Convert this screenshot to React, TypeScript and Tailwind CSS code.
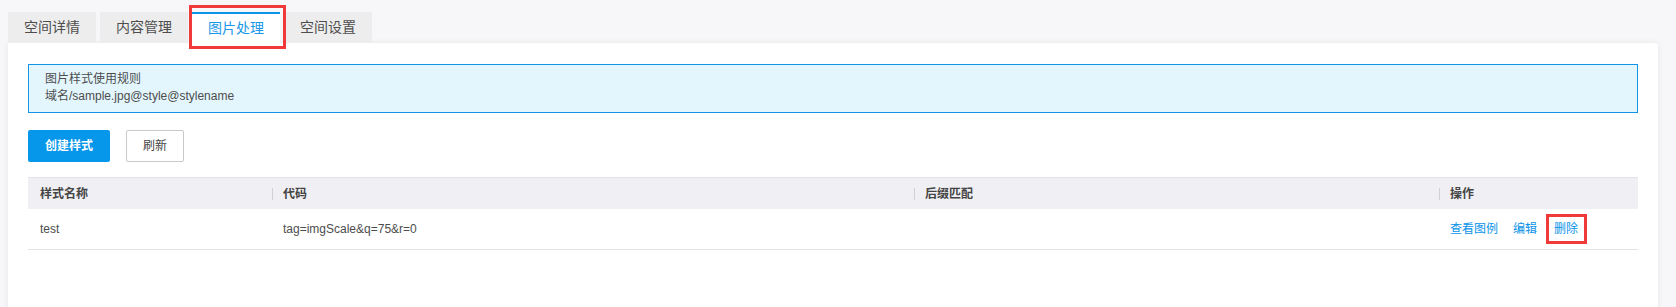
const tabs = ["空间详情", "内容管理", "图片处理", "空间设置"];
const activeTab = "图片处理";

const font = "font-['Liberation_Sans','Noto_Sans_CJK_SC',sans-serif]";

function HeaderCell({ label, divider, className }: { label: string; divider?: boolean; className: string }) {
  return (
    <div className={`flex items-center ${className}`}>
      {divider && <span className="mr-[10px] h-[12px] w-px bg-[#cfcfd4]" aria-hidden="true" />}
      <span className={divider ? "" : "pl-[12px]"}>{label}</span>
    </div>
  );
}

export default function App() {
  return (
    <div className={`h-[307px] w-[1676px] overflow-hidden bg-[#f7f7f9] pt-[12px] ${font}`}>
      <div className="flex gap-[4px] pl-[8px]">
        {tabs.map((tab) => {
          const active = tab === activeTab;
          return (
            <div
              key={tab}
              className={
                active
                  ? "relative flex h-[31px] w-[88px] items-center justify-center border-t-2 border-[#0a96e8] bg-white text-[14px] text-[#1a97e8]"
                  : "flex h-[31px] w-[88px] items-center justify-center bg-[#ededed] text-[14px] text-[#4d4d4d]"
              }
            >
              {tab}
              {active && (
                <span className="pointer-events-none absolute left-[-3px] right-[-6px] top-[-9px] bottom-[-6px] border-[3px] border-[#f03a3a]" />
              )}
            </div>
          );
        })}
      </div>

      <div className="ml-[8px] h-[300px] w-[1650px] rounded-tr-[3px] bg-white px-[20px] pt-[21px] shadow-[0_0_6px_rgba(0,0,0,0.07)]">
        <div className="h-[49px] w-[1610px] border border-[#1193e6] bg-[#e3f6fe] px-[16px] pt-[6px] text-[12px] leading-[17px] text-[#4d4d4d]">
          <p>图片样式使用规则</p>
          <p>域名/sample.jpg@style@stylename</p>
        </div>

        <div className="mt-[17px] flex gap-[16px]">
          <button className="h-[32px] w-[82px] rounded-[2px] bg-[#0696ea] text-[12px] font-bold text-white">创建样式</button>
          <button className="h-[32px] w-[58px] rounded-[2px] border border-[#c9c9c9] bg-white text-[12px] text-[#444]">刷新</button>
        </div>

        <div className="mt-[15px] w-[1610px] text-[12px]">
          <div className="flex h-[32px] border-t border-[#e4e4e8] bg-[#f0f0f4] font-bold text-[#444]">
            <HeaderCell label="样式名称" className="w-[244px]" />
            <HeaderCell label="代码" divider className="w-[642px]" />
            <HeaderCell label="后缀匹配" divider className="w-[525px]" />
            <HeaderCell label="操作" divider className="flex-1" />
          </div>
          <div className="flex h-[41px] items-center border-b border-[#e4e4e4] text-[#4d4d4d]">
            <div className="w-[244px] pl-[12px]">test</div>
            <div className="w-[642px] pl-[11px]">tag=imgScale&amp;q=75&amp;r=0</div>
            <div className="w-[525px]" />
            <div className="flex flex-1 items-center gap-[15px] pl-[11px] text-[#0a93e8]">
              <span>查看图例</span>
              <span>编辑</span>
              <span className="relative ml-[2px]">
                删除
                <span className="pointer-events-none absolute left-[-8px] right-[-9px] top-[-6px] bottom-[-6px] border-[3px] border-[#f03a3a]" />
              </span>
            </div>
          </div>
        </div>
      </div>
    </div>
  );
}
